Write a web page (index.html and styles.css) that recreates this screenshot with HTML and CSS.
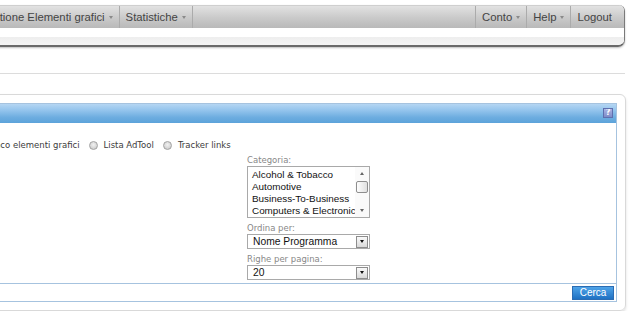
FILE: index.html
```html
<!DOCTYPE html>
<html lang="it">
<head>
<meta charset="utf-8">
<title>Elementi grafici</title>
<link rel="stylesheet" href="styles.css">
</head>
<body>
<div class="page">
  <nav class="topnav">
    <div class="topnav-bar">
      <ul class="menu menu-left">
        <li class="menu-item">Gestione Elementi grafici<span class="caret"></span></li>
        <li class="menu-item">Statistiche<span class="caret"></span></li>
      </ul>
      <ul class="menu menu-right">
        <li class="menu-item">Conto<span class="caret"></span></li>
        <li class="menu-item">Help<span class="caret"></span></li>
        <li class="menu-item">Logout</li>
      </ul>
    </div>
    <div class="topnav-sub"></div>
  </nav>

  <hr class="divider">

  <section class="panel">
    <div class="box">
      <div class="box-head"><span class="help-icon">?</span></div>
      <div class="box-body">
        <div class="radio-row">
          <label class="radio"><span class="radio-dot"></span>Elenco elementi grafici</label>
          <label class="radio"><span class="radio-dot"></span>Lista AdTool</label>
          <label class="radio"><span class="radio-dot"></span>Tracker links</label>
        </div>
        <div class="filters">
          <div class="field-label">Categoria:</div>
          <div class="listbox">
            <ul class="list-items">
              <li>Alcohol &amp; Tobacco</li>
              <li>Automotive</li>
              <li>Business-To-Business</li>
              <li>Computers &amp; Electronics</li>
            </ul>
            <div class="scrollbar">
              <span class="sb-btn"><span class="tri tri-up"></span></span>
              <span class="sb-thumb"></span>
              <span class="sb-track"></span>
              <span class="sb-btn"><span class="tri tri-down"></span></span>
            </div>
          </div>
          <div class="field-label gap">Ordina per:</div>
          <div class="select"><span>Nome Programma</span><span class="select-btn"><span class="tri tri-down dark"></span></span></div>
          <div class="field-label gap">Righe per pagina:</div>
          <div class="select"><span>20</span><span class="select-btn"><span class="tri tri-down dark"></span></span></div>
        </div>
      </div>
      <div class="box-foot"><button class="btn-cerca" type="button">Cerca</button></div>
    </div>
  </section>
</div>
</body>
</html>
```

FILE: styles.css
```css
* { box-sizing: border-box; }

html, body {
  margin: 0;
  padding: 0;
  background: #fff;
}

body {
  overflow: hidden;
  font-family: "Liberation Sans", Arial, sans-serif;
}

.page {
  width: 826px;
  margin-left: -200px;
  padding-top: 5px;
}

/* ---------- top navigation ---------- */
.topnav {
  margin-right: 1px;
  border-right: 1px solid #7a7a7a;
  border-bottom: 2px solid #6a6a6a;
  border-radius: 0 6px 7px 0;
  box-shadow: 0 1px 2px rgba(0, 0, 0, 0.25);
  overflow: hidden;
}

.topnav-bar {
  display: flex;
  justify-content: space-between;
  height: 23px;
  border-top: 1px solid #cfcfcf;
  background: linear-gradient(#e2e2e2, #c9c9c9 55%, #b9b9b9);
}

.menu {
  list-style: none;
  margin: 0;
  padding: 0;
  display: flex;
}

.menu-left { padding-left: 173px; }
.menu-right { padding-right: 6px; }

.menu-item {
  display: flex;
  align-items: center;
  padding: 0 6px;
  font-size: 11.3px;
  line-height: 22px;
  color: #444;
  white-space: nowrap;
}

.menu-left .menu-item { border-right: 1px solid #ababab; }
.menu-right .menu-item { border-left: 1px solid #ababab; }

.caret {
  width: 0;
  height: 0;
  margin-left: 4px;
  margin-top: 1px;
  border-left: 2.5px solid transparent;
  border-right: 2.5px solid transparent;
  border-top: 3px solid #8a8a8a;
}

.topnav-sub {
  height: 17px;
  background: linear-gradient(#fff 0, #fff 50%, #eeeeee 56%, #f4f4f4 100%);
}

.divider {
  width: 825px;
  margin: 26px 0 0;
  border: 0;
  border-top: 1px solid #dcdcdc;
}

/* ---------- search panel ---------- */
.panel {
  margin-top: 20px;
  padding: 8px;
  border: 1px solid #d9d9d9;
  border-radius: 6px;
  box-shadow: 0 2px 3px rgba(0, 0, 0, 0.13);
}

.box {
  border: 1px solid #a6c3df;
}

.box-head {
  height: 19px;
  display: flex;
  justify-content: flex-end;
  align-items: flex-start;
  padding: 4px 3px 0 0;
  background: linear-gradient(#b5d6f3 0%, #92c3ec 35%, #6dade0 70%, #5ca3da 100%);
}

.help-icon {
  width: 10px;
  height: 10px;
  border: 1px solid #5f6fae;
  background: linear-gradient(#a9b3e4, #7e8bc8);
  color: #fff;
  font: bold 8px/8px "DejaVu Sans", sans-serif;
  text-align: center;
  overflow: hidden;
}

.box-body {
  padding: 16px 0 3px;
  border-bottom: 1px solid #a6c3df;
}

.radio-row {
  display: flex;
  align-items: center;
  gap: 9px;
  height: 12px;
  padding-left: 157px;
  font: 8.5px/12px "DejaVu Sans", sans-serif;
  color: #3c3c3c;
}

.radio {
  display: flex;
  align-items: center;
  white-space: nowrap;
}

.radio-dot {
  width: 9px;
  height: 9px;
  margin-right: 6px;
  border-radius: 50%;
  border: 1px solid #a2a2a2;
  background: radial-gradient(circle at 50% 40%, #f2f2f2, #c4c4c4);
}

.filters {
  width: 123px;
  margin: 3px 0 0 437px;
}

.field-label {
  height: 12px;
  font: 8.5px/12px "DejaVu Sans", sans-serif;
  color: #888;
}

.field-label.gap { margin-top: 4px; }

.listbox {
  display: flex;
  height: 52px;
  border: 1px solid #a9a9a9;
}

.list-items {
  flex: 1;
  list-style: none;
  margin: 0;
  padding: 2px 0 0 4px;
  overflow: hidden;
  font: 9.9px/12px "Liberation Sans", Arial, sans-serif;
  color: #111;
  white-space: nowrap;
}

.scrollbar {
  width: 14px;
  display: flex;
  flex-direction: column;
  align-items: center;
  background: #fafafa;
}

.sb-btn {
  height: 13px;
  width: 12px;
  display: flex;
  align-items: center;
  justify-content: center;
}

.sb-thumb {
  width: 12px;
  height: 12px;
  margin-top: 1px;
  border: 1px solid #8e8e8e;
  border-radius: 2px;
  background: linear-gradient(90deg, #fdfdfd, #e0e0e0);
}

.sb-track { flex: 1; }

.tri {
  width: 0;
  height: 0;
  border-left: 2.5px solid transparent;
  border-right: 2.5px solid transparent;
}

.tri-up { border-bottom: 3px solid #666; }
.tri-down { border-top: 3px solid #666; }
.tri-down.dark { border-top-color: #111; }

.select {
  height: 15px;
  display: flex;
  align-items: center;
  justify-content: space-between;
  padding: 0 1px 0 5px;
  border: 1px solid #a9a9a9;
  font: 10.3px/13px "Liberation Sans", Arial, sans-serif;
  color: #111;
}

.select-btn {
  width: 12px;
  height: 12px;
  display: flex;
  align-items: center;
  justify-content: center;
  border: 1px solid #8d8d8d;
  background: linear-gradient(#fafafa, #d9d9d9);
}

.box-foot {
  height: 17px;
  display: flex;
  justify-content: flex-end;
  align-items: center;
  padding-right: 2px;
}

.btn-cerca {
  width: 42px;
  height: 14px;
  padding: 0;
  border: 1px solid #2b6cb3;
  background: linear-gradient(#4ea3e8, #1f71c3);
  color: #fff;
  font: 10px/12px "Liberation Sans", Arial, sans-serif;
}
```
